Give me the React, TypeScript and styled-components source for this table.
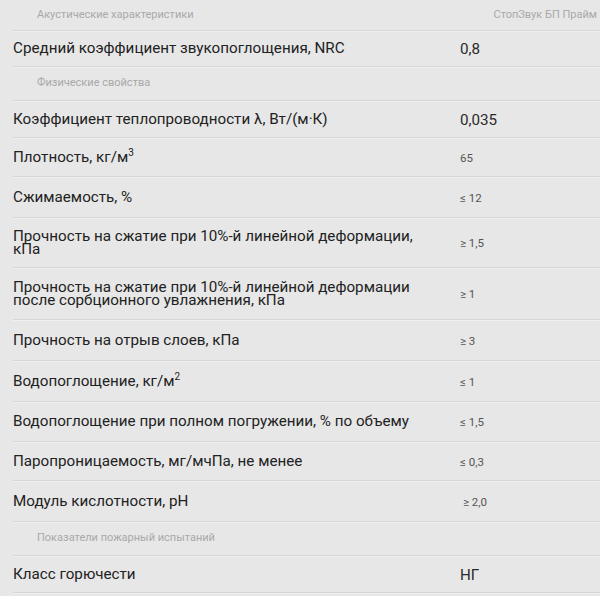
import React from "react";
import styled, { createGlobalStyle } from "styled-components";

const Global = createGlobalStyle`
  html, body { margin: 0; padding: 0; background: #e7e7e7; }
  body { font-family: Roboto, "Noto Sans", Arial, sans-serif; }
`;

const Table = styled.div`
  width: 600px;
  height: 596px;
  background: #e7e7e7;
  overflow: hidden;
  display: flex;
  flex-direction: column;
`;

const Row = styled.div<{ $h: number }>`
  display: grid;
  grid-template-columns: 447px 1fr;
  align-items: center;
  height: ${(p) => p.$h}px;
  margin-left: 13px;
  box-sizing: border-box;
  border-bottom: 1px solid #d6d6d6;
  box-shadow: 0 1px 0 #efefef;
`;

const Label = styled.div`
  font-size: 15.2px;
  line-height: 13.5px;
  color: #222;
  padding-right: 20px;
  padding-top: 1px;
`;

const Value = styled.div<{ $big?: boolean; $shift?: number }>`
  font-size: ${(p) => (p.$big ? "15.2px" : "11.5px")};
  color: ${(p) => (p.$big ? "#2a2a2a" : "#555")};
  padding-left: ${(p) => p.$shift ?? 0}px;
  padding-top: 1px;
`;

const Section = styled.div`
  font-size: 11px;
  color: #a9a9a9;
  padding-left: 24px;
  margin-top: -2px;
`;

const Brand = styled.div`
  font-size: 11px;
  color: #a9a9a9;
  text-align: right;
  padding-right: 3px;
  margin-top: -2px;
`;

const Sup = styled.sup`
  font-size: 10px;
  line-height: 0;
  vertical-align: 6px;
`;

type Item = { label: React.ReactNode; value: string; big?: boolean; h: number; shift?: number };

const rows1: Item[] = [
  { label: "Средний коэффициент звукопоглощения, NRC", value: "0,8", big: true, h: 36 },
];

const rows2: Item[] = [
  { label: "Коэффициент теплопроводности λ, Вт/(м·К)", value: "0,035", big: true, h: 37 },
  { label: <>Плотность, кг/м<Sup>3</Sup></>, value: "65", h: 39 },
  { label: "Сжимаемость, %", value: "≤ 12", h: 41 },
  { label: "Прочность на сжатие при 10%-й линейной деформации, кПа", value: "≥ 1,5", h: 50 },
  { label: "Прочность на сжатие при 10%-й линейной деформации после сорбционного увлажнения, кПа", value: "≥ 1", h: 52 },
  { label: "Прочность на отрыв слоев, кПа", value: "≥ 3", h: 41 },
  { label: <>Водопоглощение, кг/м<Sup>2</Sup></>, value: "≤ 1", h: 41 },
  { label: "Водопоглощение при полном погружении, % по объему", value: "≤ 1,5", h: 40 },
  { label: "Паропроницаемость, мг/мчПа, не менее", value: "≤ 0,3", h: 39 },
  { label: "Модуль кислотности, pH", value: "≥ 2,0", h: 41, shift: 3 },
];

const rows3: Item[] = [
  { label: "Класс горючести", value: "НГ", big: true, h: 37 },
];

const renderRows = (items: Item[]) =>
  items.map((r, i) => (
    <Row key={i} $h={r.h}>
      <Label>{r.label}</Label>
      <Value $big={r.big} $shift={r.shift}>{r.value}</Value>
    </Row>
  ));

export default function App() {
  return (
    <>
      <Global />
      <Table>
        <Row $h={31}>
          <Section>Акустические характеристики</Section>
          <Brand>СтопЗвук БП Прайм</Brand>
        </Row>
        {renderRows(rows1)}
        <Row $h={34}>
          <Section>Физические свойства</Section>
          <div />
        </Row>
        {renderRows(rows2)}
        <Row $h={34}>
          <Section>Показатели пожарный испытаний</Section>
          <div />
        </Row>
        {renderRows(rows3)}
      </Table>
    </>
  );
}
